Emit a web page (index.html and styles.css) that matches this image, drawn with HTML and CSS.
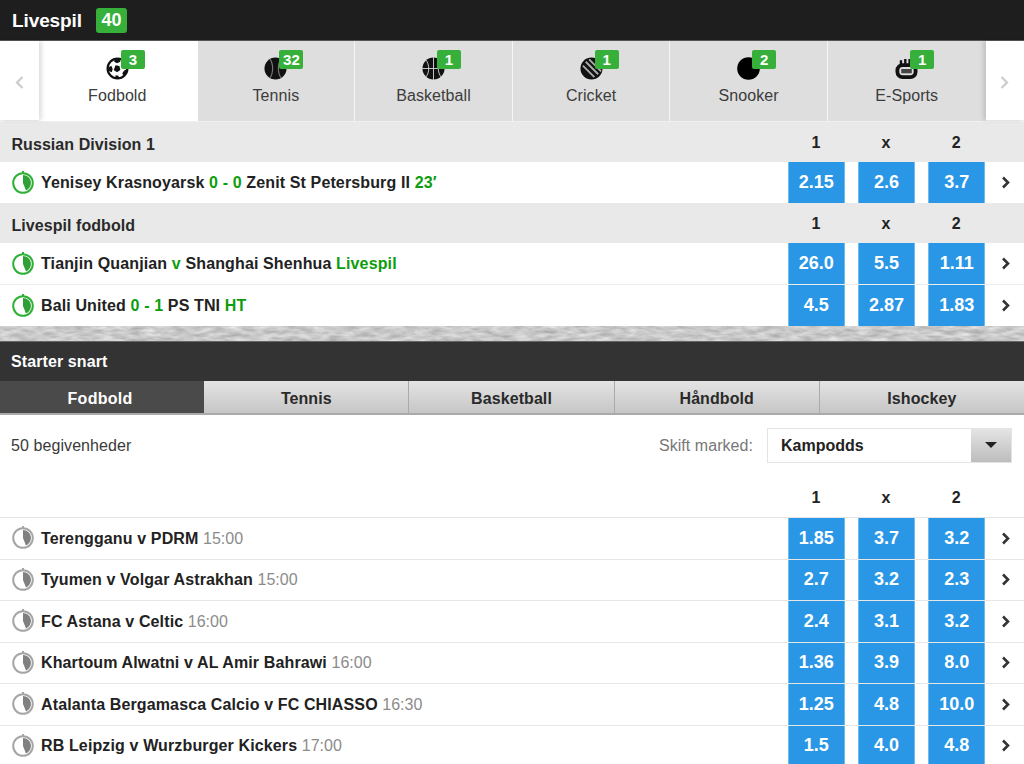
FILE: index.html
```html
<!DOCTYPE html>
<html lang="da">
<head>
<meta charset="utf-8">
<title>Livespil</title>
<link rel="stylesheet" href="styles.css">
</head>
<body>
<svg class="defs" width="0" height="0" aria-hidden="true">
  <defs>
    <g id="clock">
      <circle class="clock-ring" cx="11" cy="13" r="9.800" fill="none" stroke-width="2"/>
      <path class="clock-ring-fill" d="M10 1h2v2.500h-2z"/>
      <path class="clock-wedge" d="M11 5A8 8 0 0 1 14 20.400L11 13Z"/>
    </g>
    <path id="chev" d="M2 1.500 7 6.500 2 11.500" fill="none" stroke="currentColor" stroke-width="2.600"/>
    <filter id="stone" x="0" y="0" width="100%" height="100%" color-interpolation-filters="sRGB">
      <feTurbulence type="fractalNoise" baseFrequency=".07 .25" numOctaves="3" seed="7"/>
      <feColorMatrix type="matrix" values=".32 0 0 0 .63  .32 0 0 0 .63  .32 0 0 0 .63  0 0 0 0 1"/>
    </filter>
  </defs>
</svg>

<header class="top-bar">
  <span class="top-title">Livespil</span><span class="top-count">40</span>
</header>

<nav class="sports">
  <div class="arrow arrow-left"><svg width="9" height="13" viewBox="0 0 9 13"><path d="M7.500 1 2 6.500 7.500 12" fill="none" stroke="currentColor" stroke-width="2.200"/></svg></div>
  <div class="sport sport-on">
    <div class="sport-icon">
      <svg width="23" height="23" viewBox="0 0 24 24"><circle cx="12" cy="12" r="10.300" fill="#fff" stroke="#111" stroke-width="2.400"/><path d="M10 8.500l4 1 1 4-3.500 2.500-3.500-2.500z" fill="#111"/><path d="M9 2.500l5-.5 1 3-3.500 1.500L8.500 5zM2.500 11l3-2 1.500 3.500-1 3.500-3-1.500zM19 14l3-1.500-.5 4-3 3.500-1.500-3zM10 19l3 .5.5 3h-4z" fill="#111"/></svg>
      <span class="sport-count">3</span>
    </div>
    <span class="sport-name">Fodbold</span>
  </div>
  <div class="sport">
    <div class="sport-icon">
      <svg width="23" height="23" viewBox="0 0 24 24"><circle cx="12" cy="12" r="11.500" fill="#111"/><path d="M6 2c4 5 4 15 0 20M18 2c-4 5-4 15 0 20" fill="none" stroke="#777" stroke-width="1.200"/></svg>
      <span class="sport-count">32</span>
    </div>
    <span class="sport-name">Tennis</span>
  </div>
  <div class="sport">
    <div class="sport-icon">
      <svg width="23" height="23" viewBox="0 0 24 24"><circle cx="12" cy="12" r="11.500" fill="#111"/><path d="M12 0v24M0 12h24M4 3c4 5 4 13 0 18M20 3c-4 5-4 13 0 18" fill="none" stroke="#ccc" stroke-width="1"/></svg>
      <span class="sport-count">1</span>
    </div>
    <span class="sport-name">Basketball</span>
  </div>
  <div class="sport">
    <div class="sport-icon">
      <svg width="23" height="23" viewBox="0 0 24 24"><circle cx="12" cy="12" r="11.500" fill="#111"/><path d="M3 9 15 21M6 5 19 18M9.500 2.500 22 15" fill="none" stroke="#aaa" stroke-width="2"/></svg>
      <span class="sport-count">1</span>
    </div>
    <span class="sport-name">Cricket</span>
  </div>
  <div class="sport">
    <div class="sport-icon">
      <svg width="23" height="23" viewBox="0 0 24 24"><circle cx="12" cy="12" r="11.800" fill="#000"/></svg>
      <span class="sport-count">2</span>
    </div>
    <span class="sport-name">Snooker</span>
  </div>
  <div class="sport">
    <div class="sport-icon">
      <svg width="23" height="23" viewBox="0 0 24 24"><rect x="2.500" y="8.500" width="19" height="12.500" rx="5.500" fill="none" stroke="#111" stroke-width="4"/><rect x="6.500" y="12.500" width="11" height="4.500" fill="#444"/><path d="M5 8V3.500h2.500V8zM9.500 8V2H12v6zM14 8V2h2.500v6z" fill="#111"/></svg>
      <span class="sport-count">1</span>
    </div>
    <span class="sport-name">E-Sports</span>
  </div>
  <div class="arrow arrow-right"><svg width="9" height="13" viewBox="0 0 9 13"><path d="M1.500 1 7 6.500 1.500 12" fill="none" stroke="currentColor" stroke-width="2.200"/></svg></div>
</nav>

<section>
  <div class="group-head"><span class="group-title">Russian Division 1</span><div class="cols"><span>1</span><span>x</span><span>2</span></div></div>
  <div class="row row-live">
    <svg class="clock clock-live" width="22" height="24" viewBox="0 0 22 24"><use href="#clock"/></svg>
    <span class="event">Yenisey Krasnoyarsk <b class="g">0 - 0</b> Zenit St Petersburg II <b class="g">23′</b></span>
    <div class="odds"><span>2.15</span><span>2.6</span><span>3.7</span></div>
    <svg class="chev" width="9" height="13" viewBox="0 0 9 13"><use href="#chev"/></svg>
  </div>
  <div class="group-head"><span class="group-title">Livespil fodbold</span><div class="cols"><span>1</span><span>x</span><span>2</span></div></div>
  <div class="row row-live">
    <svg class="clock clock-live" width="22" height="24" viewBox="0 0 22 24"><use href="#clock"/></svg>
    <span class="event">Tianjin Quanjian <b class="g">v</b> Shanghai Shenhua <b class="g">Livespil</b></span>
    <div class="odds"><span>26.0</span><span>5.5</span><span>1.11</span></div>
    <svg class="chev" width="9" height="13" viewBox="0 0 9 13"><use href="#chev"/></svg>
  </div>
  <div class="row row-live">
    <svg class="clock clock-live" width="22" height="24" viewBox="0 0 22 24"><use href="#clock"/></svg>
    <span class="event">Bali United <b class="g">0 - 1</b> PS TNI <b class="g">HT</b></span>
    <div class="odds"><span>4.5</span><span>2.87</span><span>1.83</span></div>
    <svg class="chev" width="9" height="13" viewBox="0 0 9 13"><use href="#chev"/></svg>
  </div>
</section>

<svg class="strip" width="1024" height="15" aria-hidden="true"><rect width="1024" height="15" filter="url(#stone)"/></svg>

<section>
  <h2 class="soon-title">Starter snart</h2>
  <div class="tabs">
    <span class="tab tab-on">Fodbold</span>
    <span class="tab">Tennis</span>
    <span class="tab">Basketball</span>
    <span class="tab">Håndbold</span>
    <span class="tab">Ishockey</span>
  </div>
  <div class="filter">
    <span class="filter-count">50 begivenheder</span>
    <span class="filter-label">Skift marked:</span>
    <div class="select"><span class="select-val">Kampodds</span><span class="select-btn"></span></div>
  </div>
  <div class="plain-head"><div class="cols"><span>1</span><span>x</span><span>2</span></div></div>
  <div class="row row-soon">
    <svg class="clock clock-soon" width="22" height="24" viewBox="0 0 22 24"><use href="#clock"/></svg>
    <span class="event">Terengganu v PDRM <i class="time">15:00</i></span>
    <div class="odds"><span>1.85</span><span>3.7</span><span>3.2</span></div>
    <svg class="chev" width="9" height="13" viewBox="0 0 9 13"><use href="#chev"/></svg>
  </div>
  <div class="row row-soon">
    <svg class="clock clock-soon" width="22" height="24" viewBox="0 0 22 24"><use href="#clock"/></svg>
    <span class="event">Tyumen v Volgar Astrakhan <i class="time">15:00</i></span>
    <div class="odds"><span>2.7</span><span>3.2</span><span>2.3</span></div>
    <svg class="chev" width="9" height="13" viewBox="0 0 9 13"><use href="#chev"/></svg>
  </div>
  <div class="row row-soon">
    <svg class="clock clock-soon" width="22" height="24" viewBox="0 0 22 24"><use href="#clock"/></svg>
    <span class="event">FC Astana v Celtic <i class="time">16:00</i></span>
    <div class="odds"><span>2.4</span><span>3.1</span><span>3.2</span></div>
    <svg class="chev" width="9" height="13" viewBox="0 0 9 13"><use href="#chev"/></svg>
  </div>
  <div class="row row-soon">
    <svg class="clock clock-soon" width="22" height="24" viewBox="0 0 22 24"><use href="#clock"/></svg>
    <span class="event">Khartoum Alwatni v AL Amir Bahrawi <i class="time">16:00</i></span>
    <div class="odds"><span>1.36</span><span>3.9</span><span>8.0</span></div>
    <svg class="chev" width="9" height="13" viewBox="0 0 9 13"><use href="#chev"/></svg>
  </div>
  <div class="row row-soon">
    <svg class="clock clock-soon" width="22" height="24" viewBox="0 0 22 24"><use href="#clock"/></svg>
    <span class="event">Atalanta Bergamasca Calcio v FC CHIASSO <i class="time">16:30</i></span>
    <div class="odds"><span>1.25</span><span>4.8</span><span>10.0</span></div>
    <svg class="chev" width="9" height="13" viewBox="0 0 9 13"><use href="#chev"/></svg>
  </div>
  <div class="row row-soon">
    <svg class="clock clock-soon" width="22" height="24" viewBox="0 0 22 24"><use href="#clock"/></svg>
    <span class="event">RB Leipzig v Wurzburger Kickers <i class="time">17:00</i></span>
    <div class="odds"><span>1.5</span><span>4.0</span><span>4.8</span></div>
    <svg class="chev" width="9" height="13" viewBox="0 0 9 13"><use href="#chev"/></svg>
  </div>
</section>
</body>
</html>
```
FILE: styles.css
```css
* { box-sizing: border-box; }
html, body { height: 764px; overflow: hidden; }
body { margin: 0; background: #fff; color: #222; font-family: "Liberation Sans", Arial, sans-serif; font-size: 16px; }
.defs { position: absolute; }

.top-bar { height: 41px; background: #1e1e1e; border-bottom: 1px solid #555; display: flex; align-items: center; padding: 0 0 1px 12px; }
.top-title { color: #fff; font-weight: 700; font-size: 19px; margin-top: 2px; letter-spacing: -.1px; }
.top-count { margin-left: 14px; margin-top: 1px; height: 25px; width: 31px; border-radius: 3px; background: #36b03a; color: #fff; font-weight: 700; font-size: 18px; line-height: 25px; text-align: center; }

.sports { height: 81px; display: flex; background: #f0f0f0; }
.arrow { height: 79px; background: #fff; color: #ccc; display: flex; align-items: center; justify-content: center; position: relative; z-index: 1; padding-top: 3px; }
.arrow-left { flex: none; width: 39px; padding-right: 1px; box-shadow: 3px 0 4px rgba(0,0,0,.12); }
.arrow-right { flex: 1; box-shadow: -3px 0 4px rgba(0,0,0,.12); }
.sport { width: 157.600px; flex: none; height: 80px; background: #dedede; border-right: 1px solid #f5f5f5; display: flex; flex-direction: column; align-items: center; padding-top: 16px; }
.sport:nth-child(7) { border-right: 0; }
.sport-on { width: 158.600px; background: #fff; border-right: 0; padding-right: 2px; }
.sport-icon { position: relative; width: 23px; height: 23px; }
.sport-icon svg { display: block; }
.sport-count { position: absolute; left: 15px; top: -7px; min-width: 24px; height: 19px; padding: 0 3px; border-radius: 2px; background: #36b03a; color: #fff; font-weight: 700; font-size: 15px; line-height: 19px; text-align: center; }
.sport-name { margin-top: 6px; font-size: 16px; line-height: 20px; color: #3c3c3c; letter-spacing: .08px; }

.group-head { height: 40px; background: #e9e9e9; display: flex; align-items: center; padding-left: 11.500px; }
.group-title { flex: 1; padding-top: 5px; font-weight: 700; font-size: 16px; color: #2a2a2a; letter-spacing: .06px; }
.cols { display: flex; gap: 13.500px; width: 197px; margin-right: 39.500px; padding-top: 2px; font-weight: 700; font-size: 16px; color: #222; }
.cols span { width: 57px; text-align: center; }
.plain-head { height: 41px; display: flex; justify-content: flex-end; align-items: center; border-bottom: 1px solid #e4e4e4; }

.row { display: flex; align-items: center; padding-left: 11.500px; background: #fff; }
.row-live { height: 41px; }
.row-live + .row-live { height: 42px; border-top: 1px solid #ececec; }
.row-soon { height: 41.500px; border-bottom: 1px solid #e6e6e6; }
.row-soon .event { padding-top: 1px; }
.clock { flex: none; display: block; margin: 0 7.500px 2px 0; }
.clock-live { color: #2fb036; --wedge: #2fa036; }
.clock-soon { color: #a6a6a6; --wedge: #808080; }
.clock-ring { stroke: currentColor; }
.clock-ring-fill { fill: currentColor; }
.clock-wedge { fill: var(--wedge); }
.event { flex: 1; font-weight: 700; font-size: 16px; color: #222; white-space: nowrap; letter-spacing: .13px; }
.g { color: #0d9d0d; font-weight: 700; }
.time { color: #8b8b8b; font-weight: 400; font-style: normal; letter-spacing: 0; }
.odds { display: flex; align-self: stretch; gap: 13.500px; width: 197px; }
.odds span { width: 57px; background: #2a97e6; border-left: 1px solid #6dbbef; border-right: 1px solid #6dbbef; color: #fff; font-weight: 700; font-size: 18px; display: flex; align-items: center; justify-content: center; }
.chev { flex: none; margin: 0 14px 0 16px; color: #333; }

.strip { display: block; height: 15px; }

.soon-title { margin: 0; height: 40px; background: #333; border-top: 1px solid #666; color: #fff; font-size: 16px; font-weight: 700; line-height: 39px; padding-left: 11px; letter-spacing: .1px; }
.tabs { height: 34px; display: flex; border-bottom: 2px solid #aaa; }
.tab { flex: 1; background: linear-gradient(#e4e4e4, #c6c6c6); border-right: 1px solid #aaa; font-weight: 700; font-size: 16px; color: #2a2a2a; text-align: center; line-height: 35px; letter-spacing: .08px; }
.tab:last-child { border-right: 0; }
.tab-on { background: #4a4a4a; color: #fff; border-right: 0; text-indent: -4px; letter-spacing: .3px; }

.filter { height: 62px; display: flex; align-items: center; padding: 0 12px 0 11px; }
.filter-count { flex: 1; font-size: 16px; color: #3a3a3a; letter-spacing: .08px; }
.filter-label { font-size: 16px; color: #777; margin-right: 14px; letter-spacing: .05px; }
.select { width: 245px; height: 35px; margin-bottom: 2px; border: 1px solid #e4e4e4; display: flex; align-items: stretch; }
.select-val { flex: 1; padding-left: 13px; font-weight: 700; font-size: 16px; line-height: 33px; color: #222; }
.select-btn { width: 40px; background: linear-gradient(#e4e4e4, #bdbdbd); position: relative; }
.select-btn::after { content: ""; position: absolute; left: 14px; top: 13px; border-left: 6px solid transparent; border-right: 6px solid transparent; border-top: 6px solid #222; }
```
